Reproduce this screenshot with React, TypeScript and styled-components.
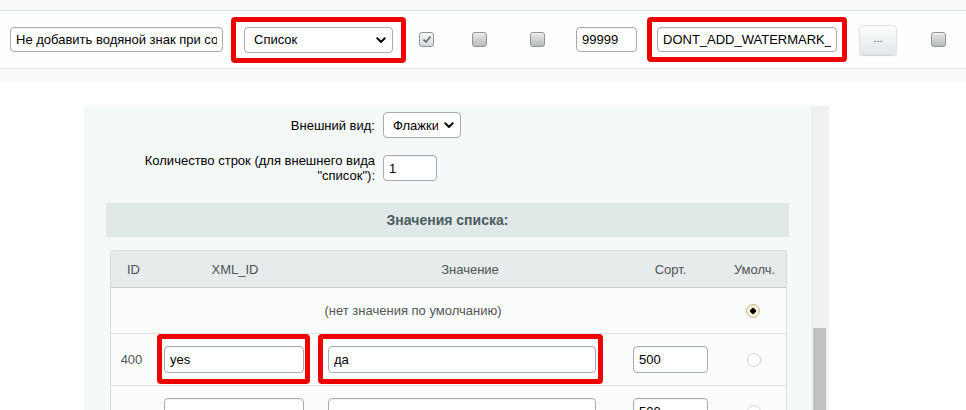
import React from "react";
import styled, { createGlobalStyle } from "styled-components";

const Global = createGlobalStyle`
    html, body {
        margin: 0;
        padding: 0;
        background: #ffffff;
        overflow: hidden;
    }
    body {
        font-family: "Liberation Sans", Arial, sans-serif;
        font-size: 13px;
        color: #000;
    }
    * { box-sizing: border-box; }
`;

function Chevron() {
    return (
        <ChevronIcon width="10" height="7" viewBox="0 0 10 7">
            <path d="M1.3 1.3 L5 5 L8.7 1.3" fill="none" stroke="#111" strokeWidth="2.1" strokeLinecap="round" strokeLinejoin="round" />
        </ChevronIcon>
    );
}

function Select({ value, width }: { value: string; width: number }) {
    return (
        <SelectWrap style={{ width }}>
            <SelectBox defaultValue={value}>
                <option>{value}</option>
            </SelectBox>
            <Chevron />
        </SelectWrap>
    );
}

function Checkbox({ checked }: { checked?: boolean }) {
    return (
        <Box $checked={checked}>
            {checked && (
                <svg width="10" height="9" viewBox="0 0 10 9">
                    <path d="M1.5 4.6 L4 7 L8.6 1.6" fill="none" stroke="#5f6366" strokeWidth="1.5" />
                </svg>
            )}
        </Box>
    );
}

function App() {
    return (
        <Page>
            <Global />
            <TopStrip>
                <TopRow>
                    <Field $w={213} defaultValue="Не добавить водяной знак при сохранении" />
                    <Gap $w={21} />
                    <Mark $t={10} $r={13} $b={10} $l={13}>
                        <Select value="Список" width={149} />
                    </Mark>
                    <Gap $w={26} />
                    <Checkbox checked />
                    <Gap $w={38} />
                    <Checkbox />
                    <Gap $w={43} />
                    <Checkbox />
                    <Gap $w={31} />
                    <Field $w={61} defaultValue="99999" />
                    <Gap $w={20} />
                    <Mark $t={10} $r={10} $b={10} $l={10}>
                        <Field $w={180} defaultValue="DONT_ADD_WATERMARK_" />
                    </Mark>
                    <Gap $w={22} />
                    <DotsButton>...</DotsButton>
                    <Gap $w={34} />
                    <Checkbox />
                </TopRow>
            </TopStrip>

            <Lower>
                <Frame>
                    <Panel>
                        <FormRow>
                            <Label>Внешний вид:</Label>
                            <Select value="Флажки" width={78} />
                        </FormRow>
                        <FormRow $mt={15}>
                            <Label>
                                Количество строк (для внешнего вида
                                <br />
                                "список"):
                            </Label>
                            <Field $w={54} $h={26} defaultValue="1" />
                        </FormRow>

                        <SectionHead>Значения списка:</SectionHead>

                        <Table>
                            <colgroup>
                                <col style={{ width: 45 }} />
                                <col style={{ width: 158 }} />
                                <col style={{ width: 312 }} />
                                <col style={{ width: 89 }} />
                                <col style={{ width: 71 }} />
                            </colgroup>
                            <thead>
                                <tr>
                                    <Th>ID</Th>
                                    <Th>XML_ID</Th>
                                    <Th>Значение</Th>
                                    <Th>Сорт.</Th>
                                    <Th $pl={8}>Умолч.</Th>
                                </tr>
                            </thead>
                            <tbody>
                                <Tr $h={46}>
                                    <Td colSpan={4} $center>(нет значения по умолчанию)</Td>
                                    <Td $center $pl={4}>
                                        <Radio $checked />
                                    </Td>
                                </Tr>
                                <Tr $h={52}>
                                    <Td $center $pr={4}>400</Td>
                                    <Td $pl={8}>
                                        <Mark $t={12} $r={6} $b={11} $l={7}>
                                            <Field $w={140} $h={27} defaultValue="yes" />
                                        </Mark>
                                    </Td>
                                    <Td $pl={14}>
                                        <Mark $t={12} $r={7} $b={11} $l={10}>
                                            <Field $w={268} $h={27} defaultValue="да" />
                                        </Mark>
                                    </Td>
                                    <Td $pl={7}>
                                        <Field $w={75} $h={27} defaultValue="500" />
                                    </Td>
                                    <Td $center $pl={6}>
                                        <Radio />
                                    </Td>
                                </Tr>
                                <Tr $h={52}>
                                    <Td />
                                    <Td $pl={8}>
                                        <Field $w={140} $h={27} defaultValue="" />
                                    </Td>
                                    <Td $pl={14}>
                                        <Field $w={268} $h={27} defaultValue="" />
                                    </Td>
                                    <Td $pl={7}>
                                        <Field $w={75} $h={27} defaultValue="500" />
                                    </Td>
                                    <Td $center $pl={6}>
                                        <Radio />
                                    </Td>
                                </Tr>
                            </tbody>
                        </Table>
                    </Panel>
                    <ScrollTrack>
                        <ScrollThumb />
                    </ScrollTrack>
                </Frame>
            </Lower>
        </Page>
    );
}

const Page = styled.div`
    width: 966px;
    height: 410px;
    overflow: hidden;
    background: #ffffff;
`;
const TopStrip = styled.div`
    height: 82px;
    padding-top: 10px;
    background: #f8f9f9;
`;
const TopRow = styled.div`
    height: 59px;
    display: flex;
    align-items: center;
    padding-left: 10px;
    background: #fefefe;
    border-top: 1px solid #dfe3e4;
    border-bottom: 1px solid #dfe3e4;
`;
const Gap = styled.div<{ $w: number }>`
    flex: none;
    width: ${(p) => p.$w}px;
`;
const Field = styled.input<{ $w: number; $h?: number }>`
    flex: none;
    width: ${(p) => p.$w}px;
    height: ${(p) => p.$h ?? 25}px;
    padding: 0 5px;
    border: 1px solid #a6acb0;
    border-radius: 4px;
    background: #ffffff;
    box-shadow: inset 0 1px 1px rgba(0, 0, 0, 0.06);
    font-family: "Liberation Sans", Arial, sans-serif;
    font-size: 13px;
    color: #000;
    outline: none;
    display: block;
`;
const Mark = styled.div<{ $t: number; $r: number; $b: number; $l: number }>`
    position: relative;
    flex: none;
    display: inline-block;
    vertical-align: middle;
    &::after {
        content: "";
        position: absolute;
        top: ${(p) => -p.$t}px;
        right: ${(p) => -p.$r}px;
        bottom: ${(p) => -p.$b}px;
        left: ${(p) => -p.$l}px;
        border: 5px solid #ee0000;
        border-radius: 4px;
        pointer-events: none;
    }
`;
const SelectWrap = styled.div`
    position: relative;
    flex: none;
`;
const SelectBox = styled.select`
    appearance: none;
    -webkit-appearance: none;
    width: 100%;
    height: 26px;
    padding: 0 22px 0 9px;
    border: 1px solid #a6acb0;
    border-radius: 4px;
    background: #ffffff;
    font-family: "Liberation Sans", Arial, sans-serif;
    font-size: 13px;
    color: #000;
    outline: none;
    display: block;
`;
const ChevronIcon = styled.svg`
    position: absolute;
    right: 7px;
    top: 10px;
    pointer-events: none;
`;
const Box = styled.span<{ $checked?: boolean }>`
    flex: none;
    width: 15px;
    height: 15px;
    border: 1px solid #8e9397;
    border-radius: 3px;
    display: flex;
    align-items: center;
    justify-content: center;
    background: ${(p) =>
        p.$checked
            ? "linear-gradient(#f3f4f5, #d6d9db)"
            : "linear-gradient(#e6e7e8, #b8bbbd)"};
    box-shadow: inset 0 1px 0 rgba(255, 255, 255, 0.7);
`;
const DotsButton = styled.button`
    flex: none;
    width: 38px;
    height: 30px;
    border: 1px solid #e1e5e7;
    border-radius: 4px;
    background: linear-gradient(#fcfdfd, #e2e7e9);
    box-shadow: 0 1px 1px rgba(0, 0, 0, 0.18);
    font-family: "Liberation Sans", Arial, sans-serif;
    font-size: 11px;
    color: #555;
    padding: 0 0 4px;
`;
const Lower = styled.div`
    padding: 24px 0 0 84px;
`;
const Frame = styled.div`
    display: flex;
    width: 745px;
    height: 330px;
`;
const Panel = styled.div`
    width: 727px;
    padding-top: 6px;
    background: #f5f9f9;
`;
const ScrollTrack = styled.div`
    width: 18px;
    background: #f1f1f1;
    padding: 222px 3px 0 2px;
`;
const ScrollThumb = styled.div`
    height: 200px;
    background: #c1c1c1;
`;
const FormRow = styled.div<{ $mt?: number }>`
    display: flex;
    align-items: center;
    gap: 8px;
    margin-top: ${(p) => p.$mt ?? 0}px;
`;
const Label = styled.div`
    width: 291px;
    text-align: right;
    line-height: 15px;
    color: #000;
`;
const SectionHead = styled.div`
    margin: 20px 22px 0;
    height: 34px;
    background: #e0e8e8;
    display: flex;
    align-items: center;
    justify-content: center;
    font-size: 14px;
    font-weight: bold;
    color: #4b5c60;
`;
const Table = styled.table`
    margin: 13px 26px 0;
    width: 675px;
    table-layout: fixed;
    border-collapse: separate;
    border-spacing: 0;
    border: 1px solid #d5dcde;
    border-bottom: none;
    border-radius: 3px 3px 0 0;
    background: #fbfcfc;
    font-size: 13px;
`;
const Th = styled.th<{ $pl?: number }>`
    height: 37px;
    padding: 0 0 0 ${(p) => p.$pl ?? 0}px;
    background: #e6ebec;
    border-bottom: 1px solid #c5ccd0;
    font-weight: normal;
    color: #4f5254;
    text-align: center;
`;
const Tr = styled.tr<{ $h: number }>`
    height: ${(p) => p.$h}px;
`;
const Td = styled.td<{ $center?: boolean; $pl?: number; $pr?: number }>`
    padding: 0 ${(p) => p.$pr ?? 0}px 0 ${(p) => p.$pl ?? 0}px;
    border-bottom: 1px solid #dde2e4;
    text-align: ${(p) => (p.$center ? "center" : "left")};
    vertical-align: middle;
    color: #555;
`;
const Radio = styled.span<{ $checked?: boolean }>`
    display: inline-block;
    vertical-align: middle;
    width: 14px;
    height: 14px;
    border-radius: 50%;
    border: 1px solid ${(p) => (p.$checked ? "#cbb98c" : "#cfd2d4")};
    background: ${(p) =>
        p.$checked
            ? "radial-gradient(circle, #000 0 2.6px, #f7efd9 3px)"
            : "#ffffff"};
`;

export default App;
